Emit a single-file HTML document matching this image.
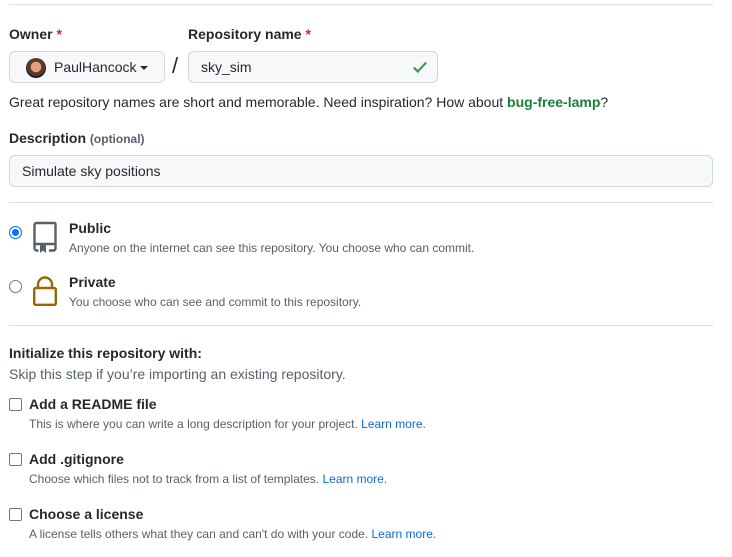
<!DOCTYPE html>
<html><head><style>
*{margin:0;padding:0;box-sizing:border-box}
body{width:732px;height:557px;background:#fff;font-family:"Liberation Sans",sans-serif;color:#24292f;position:relative;overflow:hidden}
.a{position:absolute;white-space:nowrap}
.hr{position:absolute;left:9px;width:704px;height:1px;background:#d8dee4}
.lbl{font-weight:bold;font-size:14px}
.req{color:#cf222e}
.box{position:absolute;border:1px solid #d0d7de;border-radius:6px;background:#f6f8fa}
.muted{color:#57606a;font-size:12px}
.cb{position:absolute;left:9px;width:13px;height:13px;border:1px solid #767676;border-radius:2px;background:#fff}
.rd{position:absolute;width:13px;height:13px;border-radius:50%}
a{color:#0969da;text-decoration:none}
</style></head><body>
<div class="hr" style="top:4px"></div>
<div class="a lbl" style="left:9px;top:26px">Owner <span class="req">*</span></div>
<div class="a lbl" style="left:188px;top:26px">Repository name <span class="req">*</span></div>
<div class="box" style="left:9px;top:51px;width:156px;height:32px"></div>
<div class="a" style="left:26px;top:58px;width:20px;height:20px;border-radius:50%;background:radial-gradient(circle at 50% 45%,#e0a080 0 35%,#5a3a28 36% 60%,#222 61%)"></div>
<div class="a" style="left:54px;top:59px;font-size:14px">PaulHancock</div>
<div class="a" style="left:140px;top:66px;width:0;height:0;border-left:4px solid transparent;border-right:4px solid transparent;border-top:4px solid #24292f"></div>
<div class="a" style="left:172px;top:53px;font-size:22px">/</div>
<div class="box" style="left:188px;top:51px;width:250px;height:32px"></div>
<div class="a" style="left:201px;top:59px;font-size:14px">sky_sim</div>
<svg class="a" style="left:411px;top:58px" width="18" height="18" viewBox="0 0 16 16"><path d="M2.5 8.5l3.5 3.5 7.5-8" fill="none" stroke="#2da44e" stroke-width="2"/></svg>
<div class="a" style="left:9px;top:94px;font-size:14px">Great repository names are short and memorable. Need inspiration? How about <b style="color:#1a7f37">bug-free-lamp</b>?</div>
<div class="a lbl" style="left:9px;top:130px">Description <span style="font-size:12px;color:#57606a">(optional)</span></div>
<div class="box" style="left:9px;top:155px;width:704px;height:32px"></div>
<div class="a" style="left:22px;top:163px;font-size:14px">Simulate sky positions</div>
<div class="hr" style="top:202px"></div>
<div class="rd" style="left:9px;top:226px;background:#0075ff;border:1px solid #0075ff;box-shadow:inset 0 0 0 2px #fff"></div>
<svg class="a" style="left:32px;top:221px" width="26" height="32" viewBox="0 0 26 32"><path d="M2.5 27V4a2 2 0 0 1 2-2h18a1 1 0 0 1 1 1v20H4.5a2 2 0 0 0-2 2v2a2.5 2.5 0 0 0 2.5 2.5h1.5M17 29.5h4.5a2 2 0 0 0 2-2V24" fill="none" stroke="#57606a" stroke-width="2.4"/><path d="M8 24h6v8l-3-2.5-3 2.5z" fill="#57606a"/></svg>
<div class="a lbl" style="left:69px;top:220px">Public</div>
<div class="a muted" style="left:69px;top:241px">Anyone on the internet can see this repository. You choose who can commit.</div>
<div class="rd" style="left:9px;top:280px;border:1px solid #767676;background:#fff"></div>
<svg class="a" style="left:32px;top:275px" width="26" height="32" viewBox="0 0 26 32"><path d="M6 13V9.5a7 7 0 0 1 14 0V13" fill="none" stroke="#9a6700" stroke-width="2.4"/><rect x="2.2" y="13" width="21.6" height="16.8" rx="1.5" fill="none" stroke="#9a6700" stroke-width="2.4"/></svg>
<div class="a lbl" style="left:69px;top:274px">Private</div>
<div class="a muted" style="left:69px;top:295px">You choose who can see and commit to this repository.</div>
<div class="hr" style="top:325px"></div>
<div class="a lbl" style="left:9px;top:345px">Initialize this repository with:</div>
<div class="a" style="left:9px;top:366px;font-size:14px;color:#57606a">Skip this step if you’re importing an existing repository.</div>
<div class="cb" style="top:398px"></div>
<div class="a lbl" style="left:29px;top:396px">Add a README file</div>
<div class="a muted" style="left:29px;top:417px">This is where you can write a long description for your project. <a>Learn more.</a></div>
<div class="cb" style="top:453px"></div>
<div class="a lbl" style="left:29px;top:451px">Add .gitignore</div>
<div class="a muted" style="left:29px;top:472px">Choose which files not to track from a list of templates. <a>Learn more.</a></div>
<div class="cb" style="top:508px"></div>
<div class="a lbl" style="left:29px;top:506px">Choose a license</div>
<div class="a muted" style="left:29px;top:527px">A license tells others what they can and can't do with your code. <a>Learn more.</a></div>
</body></html>
